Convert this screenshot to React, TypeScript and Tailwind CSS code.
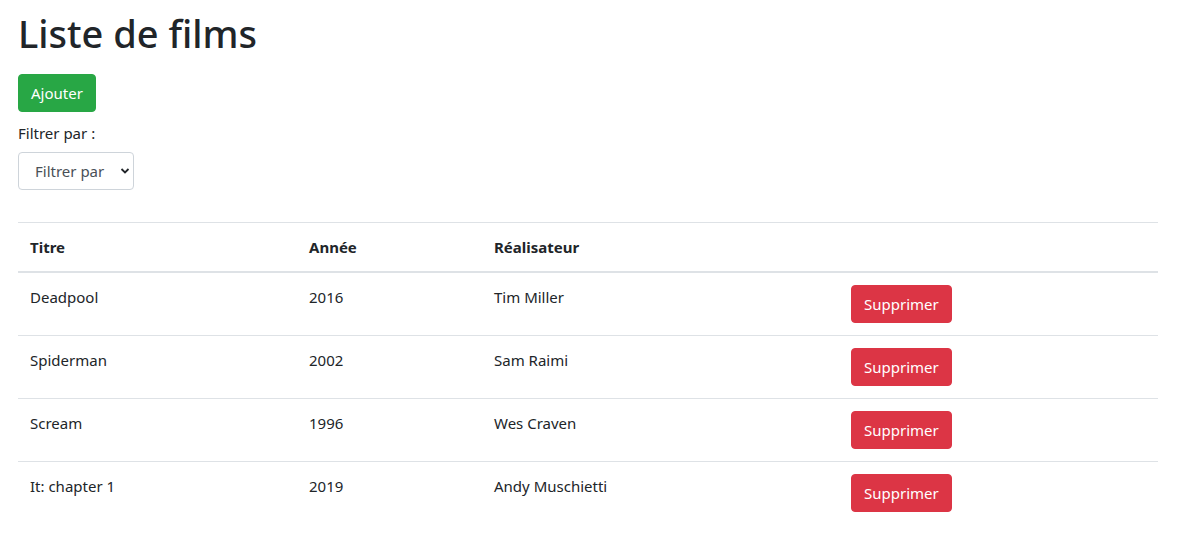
import React from "react";

type Film = { titre: string; annee: number; realisateur: string };

const films: Film[] = [
  { titre: "Deadpool", annee: 2016, realisateur: "Tim Miller" },
  { titre: "Spiderman", annee: 2002, realisateur: "Sam Raimi" },
  { titre: "Scream", annee: 1996, realisateur: "Wes Craven" },
  { titre: "It: chapter 1", annee: 2019, realisateur: "Andy Muschietti" },
];

export default function App() {
  return (
    <div className="min-h-screen bg-white px-[18px] pt-[18px] text-[15px] leading-[24px] text-[#212529] [font-family:'Segoe_UI','Noto_Sans',sans-serif]">
      <div className="w-[1140px]">
        <h1 className="mb-[26px] text-[38px] font-medium leading-[30px]">Liste de films</h1>

        <button className="h-[38px] rounded-[4px] border border-[#28a745] bg-[#28a745] px-[12px] text-white">
          Ajouter
        </button>

        <div className="mt-[9px]">
          <label className="block">Filtrer par :</label>
          <div className="relative mt-[7px] w-[116px]">
            <select className="h-[38px] w-full appearance-none rounded-[4px] border border-[#ced4da] bg-white pl-[16px] text-[#495057]">
              <option>Filtrer par</option>
              <option>Titre</option>
              <option>Année</option>
              <option>Réalisateur</option>
            </select>
            <svg
              className="pointer-events-none absolute right-[4px] top-[14px]"
              width="10"
              height="10"
              viewBox="0 0 10 10"
            >
              <path d="M1.5 3 L5 6.5 L8.5 3" fill="none" stroke="#212529" strokeWidth="1.8" />
            </svg>
          </div>
        </div>

        <table className="mt-[32px] w-full border-collapse">
          <thead>
            <tr className="border-t border-[#dee2e6]">
              <th className="w-[279px] border-b-2 border-[#dee2e6] p-[12px] text-left font-bold">Titre</th>
              <th className="w-[185px] border-b-2 border-[#dee2e6] p-[12px] text-left font-bold">Année</th>
              <th className="w-[357px] border-b-2 border-[#dee2e6] p-[12px] text-left font-bold">Réalisateur</th>
              <th className="border-b-2 border-[#dee2e6] p-[12px]"></th>
            </tr>
          </thead>
          <tbody>
            {films.map((f) => (
              <tr key={f.titre} className="border-t border-[#dee2e6] first:border-t-0">
                <td className="p-[12px] align-top">{f.titre}</td>
                <td className="p-[12px] align-top">{f.annee}</td>
                <td className="p-[12px] align-top">{f.realisateur}</td>
                <td className="p-[12px] align-top">
                  <button className="h-[38px] rounded-[4px] border border-[#dc3545] bg-[#dc3545] px-[12px] text-white">
                    Supprimer
                  </button>
                </td>
              </tr>
            ))}
          </tbody>
        </table>
      </div>
    </div>
  );
}
